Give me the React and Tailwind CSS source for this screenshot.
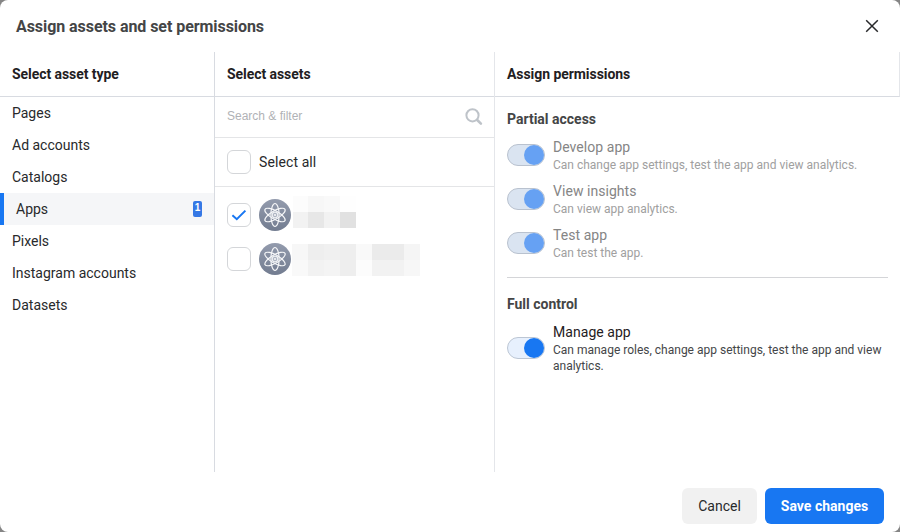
const ASSET_TYPES = ['Pages', 'Ad accounts', 'Catalogs', 'Apps', 'Pixels', 'Instagram accounts', 'Datasets'];

const PARTIAL = [
  ['Develop app', 'Can change app settings, test the app and view analytics.'],
  ['View insights', 'Can view app analytics.'],
  ['Test app', 'Can test the app.'],
];

function ColumnHeader({ children, className = '' }) {
  return (
    <h2 className={`flex h-[45px] shrink-0 items-center border-b border-[#d8dbe1] px-3 text-sm font-bold tracking-[-0.06px] text-[#1f2022] ${className}`}>
      {children}
    </h2>
  );
}

function Checkbox({ checked = false }) {
  return (
    <span className="flex size-6 shrink-0 items-center justify-center rounded-md border border-[#d4d6d9] bg-white">
      {checked && (
        <svg className="size-4" viewBox="0 0 16 16" fill="none" stroke="#1877f2" strokeWidth="2">
          <path d="M1.4 8.2 5.8 12.2 14.4 3.6" />
        </svg>
      )}
    </span>
  );
}

function AppAvatar() {
  return (
    <svg className="ml-2 size-8 shrink-0" viewBox="0 0 32 32" fill="none">
      <defs>
        <linearGradient id="avatar" x1="0" y1="0" x2="0" y2="1">
          <stop offset="0" stopColor="#939bad" />
          <stop offset="1" stopColor="#727c90" />
        </linearGradient>
      </defs>
      <circle cx="16" cy="16" r="16" fill="url(#avatar)" />
      <g stroke="#f5f6f8" strokeWidth="1.2">
        <ellipse cx="16" cy="16" rx="4.1" ry="11.5" />
        <ellipse cx="16" cy="16" rx="4.1" ry="11.5" transform="rotate(60 16 16)" />
        <ellipse cx="16" cy="16" rx="4.1" ry="11.5" transform="rotate(120 16 16)" />
        <circle cx="16" cy="16" r="2.8" fill="#aeb5c2" stroke="#eef0f3" />
      </g>
      <circle cx="16" cy="16" r="1.1" fill="#f5f6f8" />
    </svg>
  );
}

function Mosaic({ cells, className }) {
  return (
    <div className={`grid h-8 shrink-0 self-start ${className}`}>
      {cells.map((c, i) => (
        <span key={i} style={{ backgroundColor: c }} />
      ))}
    </div>
  );
}

function Permission({ title, text, disabled = false }) {
  return (
    <div className="flex items-center gap-2">
      <span className={`flex h-[22px] w-[38px] shrink-0 items-center justify-end rounded-full border ${disabled ? 'border-[#b9c2cf] bg-[#dae4f1]' : 'border-[#bcc6d4] bg-[#e7f0fd]'}`}>
        <span className={`size-5 rounded-full ${disabled ? 'bg-[#66a1f3]' : 'bg-[#1877f2]'}`} />
      </span>
      <div className="min-w-0 flex-1">
        <div className={`text-sm leading-5 tracking-[0.05px] ${disabled ? 'text-[#858585]' : 'text-[#1f2022]'}`}>{title}</div>
        <div className={`text-xs leading-4 ${disabled ? 'text-[#a0a0a0]' : 'text-[#444648]'}`}>{text}</div>
      </div>
    </div>
  );
}

export default function App() {
  return (
    <div className="h-[532px] w-[900px] bg-[#858585] font-[Roboto,sans-serif]">
      <div className="flex h-full flex-col overflow-hidden rounded-lg bg-white text-sm text-[#28292b]">
        <header className="flex h-[52px] shrink-0 items-center justify-between px-4">
          <h1 className="pt-0.5 text-base font-bold tracking-[-0.06px] text-[#444546]">Assign assets and set permissions</h1>
          <svg className="size-6" viewBox="0 0 24 24" fill="none" stroke="#28292b" strokeWidth="1.5">
            <path d="m6.2 6.2 11.6 11.6M17.8 6.2 6.2 17.8" />
          </svg>
        </header>

        <main className="flex h-[420px] shrink-0">
          <section className="flex w-[215px] flex-col border-r border-[#d8dbe1]">
            <ColumnHeader>Select asset type</ColumnHeader>
            <ul>
              {ASSET_TYPES.map((name) =>
                name === 'Apps' ? (
                  <li key={name} className="flex h-8 items-center justify-between border-l-4 border-[#1877f2] bg-[#f5f6f8] px-3">
                    {name}
                    <span className="flex h-4 w-[9px] justify-center rounded-xs bg-[#3578e5] font-['Liberation_Sans',sans-serif] text-[10px] leading-[14px] font-bold text-white">1</span>
                  </li>
                ) : (
                  <li key={name} className="flex h-8 items-center px-3">{name}</li>
                ),
              )}
            </ul>
          </section>

          <section className="flex w-[280px] flex-col border-r border-[#e4e6ea]">
            <ColumnHeader>Select assets</ColumnHeader>
            <div className="flex h-[41px] items-center justify-between border-b border-[#e4e5e7] pr-[11px] pl-3">
              <span className="pb-0.5 font-['Liberation_Sans',sans-serif] text-xs text-[#b0b2b6]">Search &amp; filter</span>
              <svg className="size-5" viewBox="0 0 20 20" fill="none" stroke="#bec3c9">
                <circle cx="9.5" cy="8.3" r="6.1" strokeWidth="2" />
                <path d="m14.2 13 3.7 3.7" strokeWidth="2.6" strokeLinecap="round" />
              </svg>
            </div>
            <div className="flex h-[49px] items-center gap-2 border-b border-[#e4e5e7] px-3 tracking-[0.1px]">
              <Checkbox />
              Select all
            </div>
            <div className="flex flex-col px-3 pt-1.5">
              <div className="flex h-11 items-center">
                <Checkbox checked />
                <AppAvatar />
                <Mosaic
                  className="mt-[3px] ml-0.5 w-[63px] grid-cols-[15px_16px_16px_16px] grid-rows-2"
                  cells={['#fcfcfc', '#f7f7f7', '#f9f9f9', '#fefefe', '#f2f2f2', '#e7e7e7', '#f2f2f2', '#e1e1e1']}
                />
              </div>
              <div className="flex h-11 items-center">
                <Checkbox />
                <AppAvatar />
                <Mosaic
                  className="mt-[7px] ml-px w-32 grid-cols-8 grid-rows-2"
                  cells={['#f7f7f7', '#eeeeee', '#f0f0f0', '#eeeeee', '#f9f9f9', '#ebebeb', '#ebebeb', '#f5f5f5', '#f9f9f9', '#f2f2f2', '#f4f4f4', '#eeeeee', '#fcfcfc', '#f2f2f2', '#f2f2f2', '#f7f7f7']}
                />
              </div>
            </div>
          </section>

          <section className="flex w-[405px] flex-col">
            <ColumnHeader className="border-r border-r-[#e4e6ea]">Assign permissions</ColumnHeader>
            <div className="flex flex-col px-3 pt-3">
              <h3 className="font-bold text-[#444546]">Partial access</h3>
              <div className="mt-2 flex flex-col gap-2">
                {PARTIAL.map(([title, text]) => (
                  <Permission key={title} title={title} text={text} disabled />
                ))}
              </div>
              <hr className="my-4 border-[#d4d5d8]" />
              <h3 className="font-bold text-[#444546]">Full control</h3>
              <div className="mt-2">
                <Permission title="Manage app" text="Can manage roles, change app settings, test the app and view analytics." />
              </div>
            </div>
          </section>
        </main>

        <footer className="flex justify-end gap-2 px-4 pt-4">
          <button className="h-9 w-[75px] rounded-md bg-[#f1f1f1]">Cancel</button>
          <button className="h-9 w-[119px] rounded-md bg-[#1877f2] font-bold text-white">Save changes</button>
        </footer>
      </div>
    </div>
  );
}
